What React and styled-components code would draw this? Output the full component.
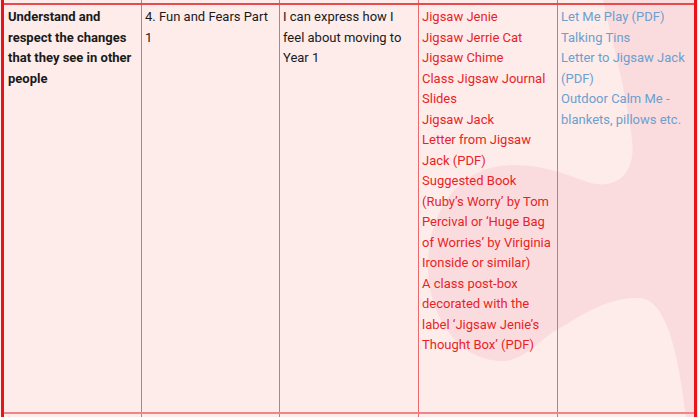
import React from 'react';
import styled, { createGlobalStyle } from 'styled-components';

const GlobalStyle = createGlobalStyle`
    html, body {
        margin: 0;
        padding: 0;
        background: #fdecea;
    }
`;

const columns = [
    {
        tone: 'dark',
        bold: true,
        lines: ['Understand and respect the changes that they see in other people'],
    },
    {
        tone: 'dark',
        lines: ['4. Fun and Fears Part 1'],
    },
    {
        tone: 'dark',
        lines: ['I can express how I feel about moving to Year 1'],
    },
    {
        tone: 'red',
        lines: [
            'Jigsaw Jenie',
            'Jigsaw Jerrie Cat',
            'Jigsaw Chime',
            'Class Jigsaw Journal Slides',
            'Jigsaw Jack',
            'Letter from Jigsaw Jack (PDF)',
            'Suggested Book (Ruby\u2019s Worry\u2019 by Tom Percival or \u2018Huge Bag of Worries\u2019 by Viriginia Ironside or similar)',
            'A class post-box decorated with the label \u2018Jigsaw Jenie\u2019s Thought Box\u2019 (PDF)',
        ],
    },
    {
        tone: 'blue',
        lines: [
            'Let Me Play (PDF)',
            'Talking Tins',
            'Letter to Jigsaw Jack (PDF)',
            'Outdoor Calm Me - blankets, pillows etc.',
        ],
    },
];

const tones = {
    dark: '#1a1a1a',
    red: '#ea1f27',
    blue: '#6c9fce',
};

export default function App() {
    return (
        <Page>
            <GlobalStyle />
            <Blob viewBox="0 0 698 417" aria-hidden="true">
                <path d="M603,0 L698,0 L698,417 L686,417 C680,370 670,300 640,298 C605,296 575,320 553,332 C535,345 525,358 505,361 C460,362 430,320 428,270 C427,215 455,172 500,166 C535,162 560,172 590,183 C620,190 636,170 632,140 C628,100 612,40 603,0 Z" />
            </Blob>
            <Table>
                <Row $height={3}>
                    {columns.map((c, i) => <Cell key={i} />)}
                </Row>
                <Row $height={411} $main>
                    {columns.map((c, i) => (
                        <Cell key={i} $tone={c.tone} $bold={c.bold}>
                            {c.lines.map((l, j) => <Line key={j}>{l}</Line>)}
                        </Cell>
                    ))}
                </Row>
                <Row $height={3}>
                    {columns.map((c, i) => <Cell key={i} />)}
                </Row>
            </Table>
        </Page>
    );
}

const Page = styled.div`
    position: relative;
    width: 698px;
    height: 417px;
    overflow: hidden;
    background: #fdecea;
`;

const Blob = styled.svg`
    position: absolute;
    inset: 0;
    width: 698px;
    height: 417px;
    z-index: 0;

    path {
        fill: #fbdcde;
    }
`;

const Table = styled.div`
    position: relative;
    z-index: 1;
    margin-left: 1px;
    width: 690px;
    border-left: 3px solid #e8141c;
    border-right: 3px solid #e8141c;
`;

const Row = styled.div`
    display: grid;
    grid-template-columns: 138px 138px 139px 139px 136px;
    height: ${p => p.$height}px;
    box-sizing: border-box;
    ${p => p.$main && `
        border-top: 2px solid #e44a4e;
        border-bottom: 2px solid #f08486;
    `}
`;

const Cell = styled.div`
    box-sizing: border-box;
    padding: 2px 4px 0 3px;
    border-right: 1px solid #ec6a6e;
    font-family: Roboto, "Liberation Sans", sans-serif;
    font-size: 13px;
    line-height: 20.5px;
    font-weight: ${p => (p.$bold ? 700 : 400)};
    color: ${p => tones[p.$tone] || '#1a1a1a'};

    &:first-child {
        padding-left: 4px;
    }

    &:last-child {
        border-right: none;
    }
`;

const Line = styled.div``;
